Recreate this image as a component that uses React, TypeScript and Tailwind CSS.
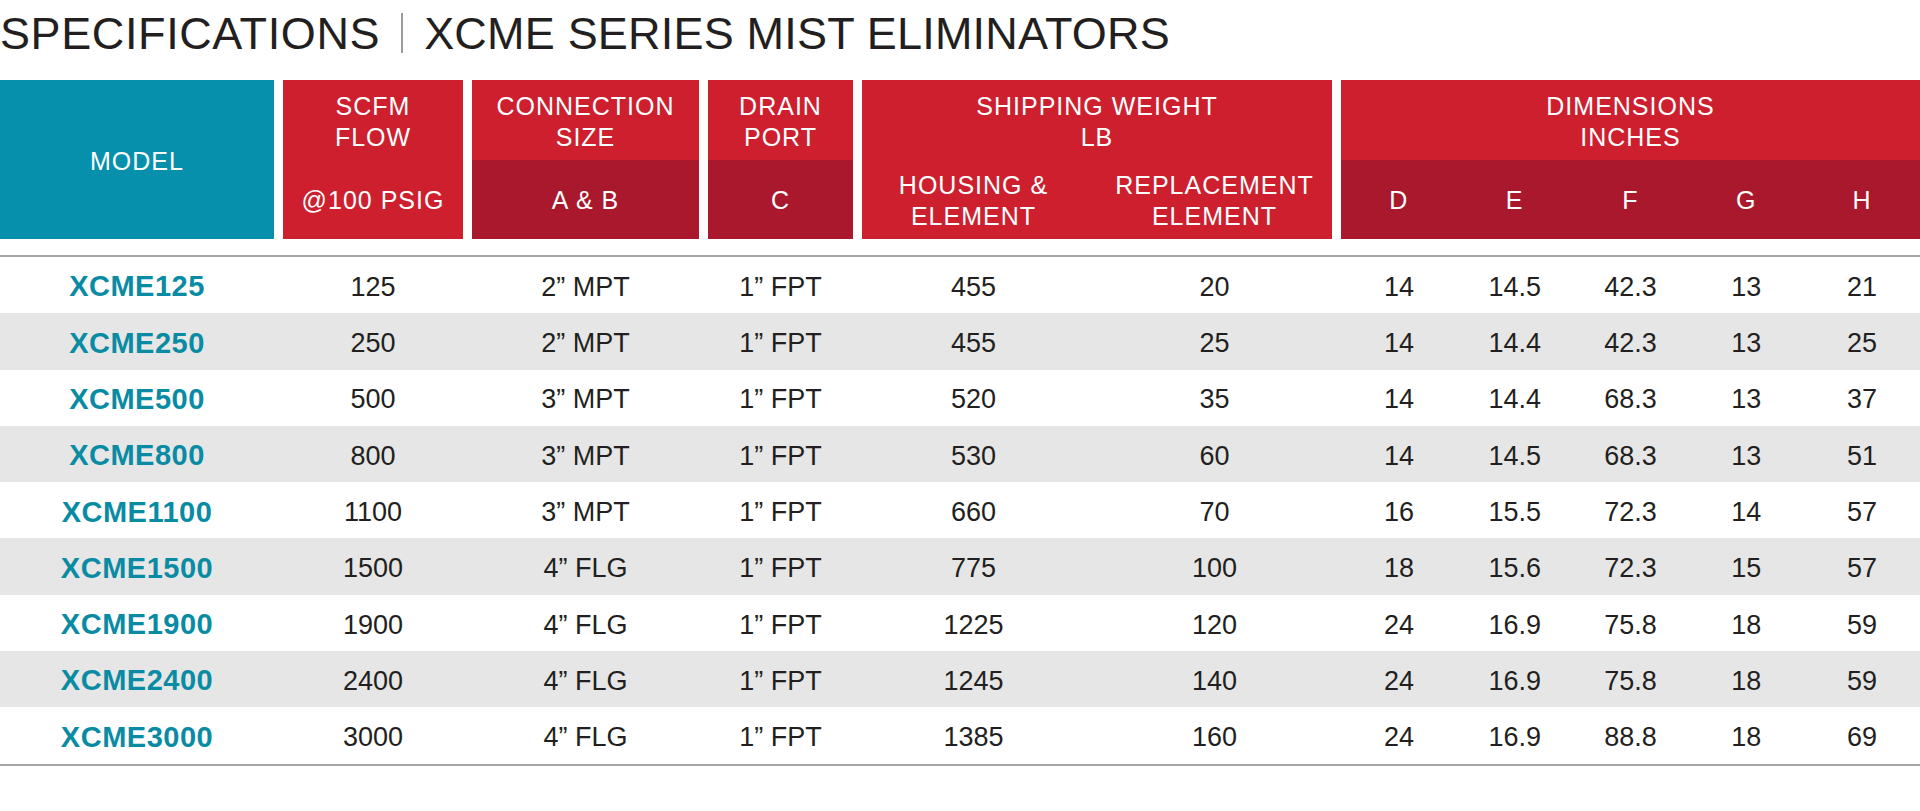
const rows = [
  ["XCME125", "125", "2” MPT", "1” FPT", "455", "20", "14", "14.5", "42.3", "13", "21"],
  ["XCME250", "250", "2” MPT", "1” FPT", "455", "25", "14", "14.4", "42.3", "13", "25"],
  ["XCME500", "500", "3” MPT", "1” FPT", "520", "35", "14", "14.4", "68.3", "13", "37"],
  ["XCME800", "800", "3” MPT", "1” FPT", "530", "60", "14", "14.5", "68.3", "13", "51"],
  ["XCME1100", "1100", "3” MPT", "1” FPT", "660", "70", "16", "15.5", "72.3", "14", "57"],
  ["XCME1500", "1500", "4” FLG", "1” FPT", "775", "100", "18", "15.6", "72.3", "15", "57"],
  ["XCME1900", "1900", "4” FLG", "1” FPT", "1225", "120", "24", "16.9", "75.8", "18", "59"],
  ["XCME2400", "2400", "4” FLG", "1” FPT", "1245", "140", "24", "16.9", "75.8", "18", "59"],
  ["XCME3000", "3000", "4” FLG", "1” FPT", "1385", "160", "24", "16.9", "88.8", "18", "69"],
]

export default function App() {
  return (
    <div className="w-[1920px] h-[811px] bg-white font-['Liberation_Sans',Arial,sans-serif] overflow-hidden">
      {/* Title */}
      <h1 className="h-[80px] pt-[11px] flex items-start text-[45px] leading-[45px] text-[#231f20] whitespace-nowrap">
        <span className="tracking-[0.6px]">SPECIFICATIONS</span>
        <span className="inline-block w-[2px] h-[40px] bg-[#9c9c9c] mx-[21px] mt-[2px]" />
        <span className="tracking-[0.2px]">XCME SERIES MIST ELIMINATORS</span>
      </h1>

      {/* Header blocks */}
      <div className="flex gap-[9px] h-[159px] text-white text-[25px] leading-[31px] tracking-[1px] text-center">
        <div className="w-[274px] bg-[#0790ab] flex items-center justify-center pt-[3px]">MODEL</div>

        <div className="w-[180px] bg-[#cd1f2e] flex flex-col">
          <div className="h-[80px] pt-[3px] flex items-center justify-center">SCFM<br />FLOW</div>
          <div className="flex-1 pt-[2px] flex items-center justify-center">@100 PSIG</div>
        </div>

        <div className="w-[227px] flex flex-col">
          <div className="h-[80px] pt-[3px] bg-[#cd1f2e] flex items-center justify-center">CONNECTION<br />SIZE</div>
          <div className="flex-1 pt-[2px] bg-[#a9182c] flex items-center justify-center">A &amp; B</div>
        </div>

        <div className="w-[145px] flex flex-col">
          <div className="h-[80px] pt-[3px] bg-[#cd1f2e] flex items-center justify-center">DRAIN<br />PORT</div>
          <div className="flex-1 pt-[2px] bg-[#a9182c] flex items-center justify-center">C</div>
        </div>

        <div className="w-[470px] bg-[#cd1f2e] flex flex-col">
          <div className="h-[80px] pt-[3px] flex items-center justify-center">SHIPPING WEIGHT<br />LB</div>
          <div className="flex-1 pt-[2px] flex">
            <div className="w-[235px] pr-[12px] flex items-center justify-center">HOUSING &amp;<br />ELEMENT</div>
            <div className="w-[235px] flex items-center justify-center">REPLACEMENT<br />ELEMENT</div>
          </div>
        </div>

        <div className="w-[579px] flex flex-col">
          <div className="h-[80px] pt-[3px] bg-[#cd1f2e] flex items-center justify-center">DIMENSIONS<br />INCHES</div>
          <div className="flex-1 pt-[2px] bg-[#a9182c] grid grid-cols-5 items-center">
            {["D", "E", "F", "G", "H"].map((l) => (
              <span key={l}>{l}</span>
            ))}
          </div>
        </div>
      </div>

      <div className="h-[16px]" />
      <div className="h-[2px] bg-[#a5a5a5]" />

      {/* Rows */}
      <div className="text-[27px] text-[#231f20] text-center">
        {rows.map((r, i) => (
          <div key={r[0]} className={`flex gap-[9px] h-[56.3px] pt-[4px] items-center ${i % 2 === 1 ? "bg-[#e6e6e6]" : "bg-white"}`}>
            <div className="w-[274px] font-bold text-[29px] tracking-[0.5px] text-[#0a8ba4]">{r[0]}</div>
            <div className="w-[180px]">{r[1]}</div>
            <div className="w-[227px]">{r[2]}</div>
            <div className="w-[145px]">{r[3]}</div>
            <div className="w-[470px] flex">
              <div className="w-[235px] pr-[12px]">{r[4]}</div>
              <div className="w-[235px]">{r[5]}</div>
            </div>
            <div className="w-[579px] grid grid-cols-5">
              {r.slice(6).map((v, j) => (
                <span key={j}>{v}</span>
              ))}
            </div>
          </div>
        ))}
      </div>
      <div className="h-[2px] bg-[#a5a5a5]" />
    </div>
  )
}
